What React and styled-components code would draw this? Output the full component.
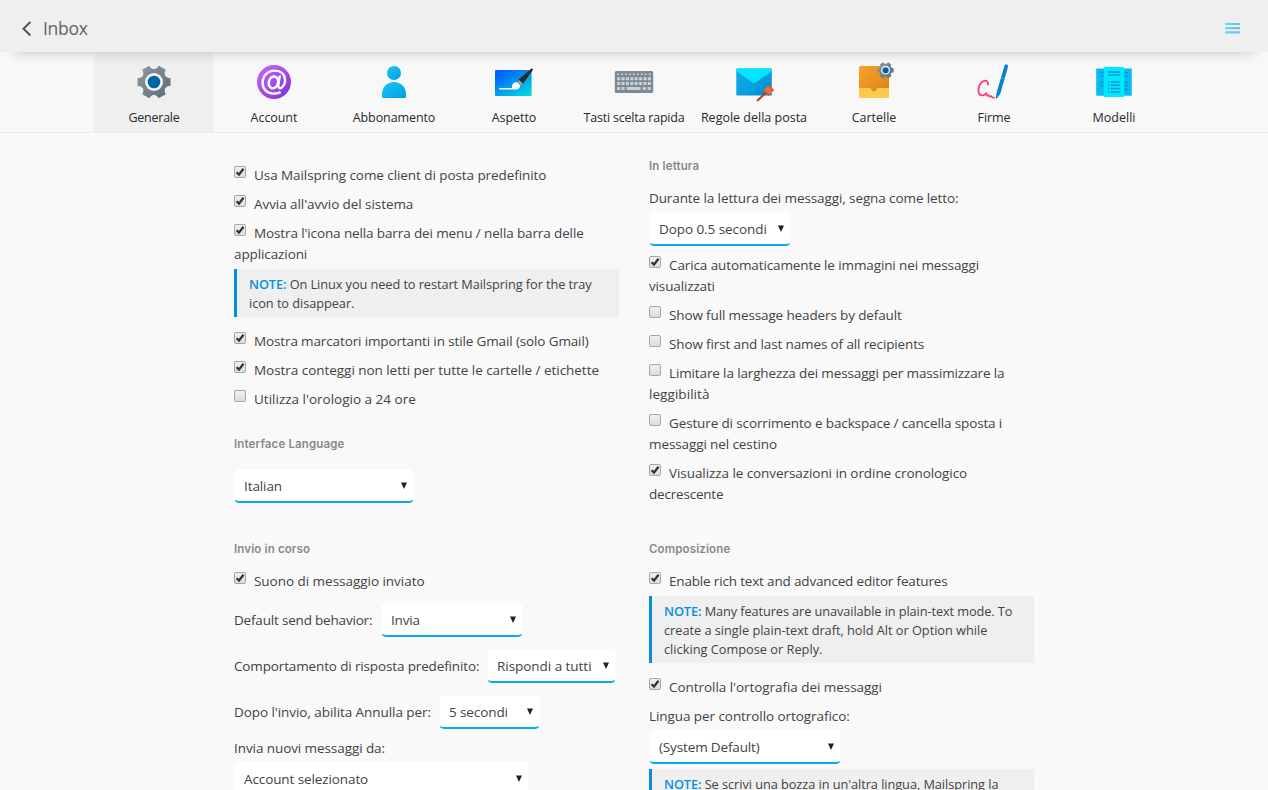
import React from "react";
import styled, { createGlobalStyle } from "styled-components";

const Global = createGlobalStyle`
  * { box-sizing: border-box; }
  html, body { margin: 0; padding: 0; height: 100%; overflow: hidden; background: #f9f9f9; }
  body { font-family: "Open Sans", "Noto Sans", sans-serif; font-size: 13.5px; color: #434343; }
`;

const Page = styled.div`
  height: 100vh;
  overflow: hidden;
  display: flex;
  flex-direction: column;
`;

const Toolbar = styled.header`
  flex: none;
  height: 52px;
  padding: 4px 28px 0 21px;
  display: flex;
  align-items: center;
  justify-content: space-between;
  background: #efefef;
  box-shadow: 0 14px 14px -14px rgba(0, 0, 0, 0.22);
  position: relative;
  z-index: 1;
`;

const BackButton = styled.button`
  display: flex;
  align-items: center;
  gap: 11px;
  padding: 0;
  border: 0;
  background: none;
  font: 400 17.5px/24px "Open Sans", sans-serif;
  letter-spacing: -0.3px;
  color: #636363;
`;

const BackLabel = styled.span`
  padding-bottom: 1px;
`;

const Tabs = styled.nav`
  flex: none;
  height: 81px;
  padding-left: 94px;
  display: flex;
  border-bottom: 1px solid #ebebeb;
  background: #f8f8f8;
`;

const Tab = styled.button`
  width: 120px;
  height: 80px;
  padding: 10px 0 0;
  border: 0;
  border-radius: 5px 5px 0 0;
  background: ${(p) => (p.$active ? "#efefef" : "transparent")};
  display: flex;
  flex-direction: column;
  align-items: center;
  gap: 7px;
`;

const TabIcon = styled.svg`
  width: 40px;
  height: 40px;
  overflow: visible;
`;

const TabLabel = styled.span`
  font: 400 12.5px/18px "Open Sans", sans-serif;
  letter-spacing: ${(p) => p.$tracking}px;
  color: #2b2829;
  white-space: nowrap;
`;

const Content = styled.main`
  flex: none;
  width: 800px;
  margin-left: 234px;
  padding-top: 24px;
  display: grid;
  grid-template-columns: 385px 385px;
  grid-template-rows: 383px auto;
  column-gap: 30px;
`;

const Section = styled.section`
  display: flex;
  flex-direction: column;
  align-items: flex-start;
  padding-top: ${(p) => p.$top || 0}px;
`;

const Heading = styled.h6`
  margin: ${(p) => p.$margin || "0 0 9px"};
  font: 600 11.5px/18px Inter, sans-serif;
  letter-spacing: 0.14px;
  color: #888;
`;

const Option = styled.label`
  display: block;
  width: 100%;
  padding: 4px 0;
  line-height: 21px;
`;

const Run = styled.span`
  letter-spacing: ${(p) => p.$tracking || 0}px;
  white-space: nowrap;
`;

const Box = styled.span`
  display: inline-flex;
  align-items: center;
  justify-content: center;
  width: 12px;
  height: 12px;
  margin: 1px 8px 0 0;
  vertical-align: top;
  border: 1px solid #a6a6a6;
  border-radius: 2px;
  background: linear-gradient(#f0f0f0, #dcdcdc);
`;

const Note = styled.div`
  width: 100%;
  margin-bottom: 10px;
  padding: 6px 0 4px 12px;
  border-left: 3px solid #0490d9;
  background: #efefef;
  font-size: 12.75px;
  line-height: 19px;
  white-space: nowrap;
  b { font-weight: 600; letter-spacing: -0.1px; color: #0490e0; }
`;

const Text = styled.div`
  padding: 4px 0 3px;
  line-height: 21px;
`;

const Field = styled.div`
  height: 46px;
  padding-top: 2px;
  display: flex;
  align-items: center;
`;

const FieldLabel = styled.span`
  width: ${(p) => p.$width}px;
  padding-top: 1px;
  line-height: 21px;
`;

const Select = styled.div`
  flex: none;
  width: ${(p) => p.$width}px;
  height: 34px;
  margin: ${(p) => p.$margin || "0"};
  padding: 0 6px 0 9px;
  display: flex;
  align-items: center;
  justify-content: space-between;
  border: 1px solid #fdfdfd;
  border-bottom: 2px solid #05ade6;
  border-radius: 5px;
  background: #fff;
  line-height: 21px;
`;

const Value = styled(Run)`
  padding-top: 2px;
`;

const Arrow = () => (
  <svg width="6" height="8" viewBox="0 0 6 8"><path d="M0 .5h6L3 7z" fill="#222" /></svg>
);

const gearPath = (cx, cy, r) => {
  const pt = (deg, rad) => {
    const a = (deg * Math.PI) / 180;
    return `${(cx + Math.cos(a) * rad * r).toFixed(2)} ${(cy + Math.sin(a) * rad * r).toFixed(2)}`;
  };
  let d = "";
  for (let i = 0; i < 6; i++) {
    const a = i * 60;
    d += `${i ? "L" : "M"}${pt(a - 14, 1)}L${pt(a + 14, 1)}Q${pt(a + 16, 0.84)} ${pt(a + 22, 0.8)}Q${pt(a + 30, 0.7)} ${pt(a + 38, 0.8)}Q${pt(a + 44, 0.84)} ${pt(a + 46, 1)}`;
  }
  return d + "z";
};

const Gear = ({ cx, cy, r, id }) => (
  <>
    <defs>
      <linearGradient id={id} x1="0" y1="0" x2="1" y2="1"><stop offset="0" stopColor="#8e9ba1" /><stop offset="1" stopColor="#5d6b74" /></linearGradient>
    </defs>
    <path d={gearPath(cx, cy, r)} fill={`url(#${id})`} />
    <circle cx={cx} cy={cy} r={r * 0.53} fill="#f2f2f2" />
    <circle cx={cx} cy={cy} r={r * 0.37} fill="#0064a8" />
  </>
);

const GeneralIcon = () => <TabIcon viewBox="0 0 40 40"><Gear cx={20} cy={20} r={17} id="gearLarge" /></TabIcon>;

const AccountIcon = () => (
  <TabIcon viewBox="0 0 40 40">
    <defs><linearGradient id="acc" x1="0" y1="0" x2="1" y2="1"><stop offset="0.1" stopColor="#c463f0" /><stop offset="0.9" stopColor="#8238dc" /></linearGradient></defs>
    <circle cx="20" cy="20" r="17" fill="url(#acc)" />
    <g fill="none" stroke="#fff" strokeWidth="2.4">
      <ellipse cx="19.4" cy="20.4" rx="4.6" ry="6" transform="rotate(14 19.4 20.4)" />
      <path d="M25.800 13.600 24.300 22.800C23.900 25.900 25.600 26.800 27.300 25.700 29.800 24 31.200 21 31 17.600 30.600 11.800 26.400 8.600 20.800 8.600 13.600 8.600 8.600 13.800 8.600 20.600c0 6.800 4.600 11 11.200 11 2.800 0 5-.5 6.800-1.500" />
    </g>
  </TabIcon>
);

const PersonIcon = () => (
  <TabIcon viewBox="0 0 40 40">
    <defs><linearGradient id="per" x1="0" y1="0" x2="1" y2="1"><stop offset="0" stopColor="#1cc6ee" /><stop offset="1" stopColor="#009fe6" /></linearGradient></defs>
    <circle cx="20" cy="11" r="7" fill="url(#per)" />
    <path d="M8 35V32C8 25 13 20 20 20s12 5 12 12v3q0 1-1 1H9q-1 0-1-1z" fill="url(#per)" />
  </TabIcon>
);

const BrushIcon = () => (
  <TabIcon viewBox="0 0 40 40">
    <defs><linearGradient id="can" x1="0.1" y1="0" x2="0.9" y2="1"><stop offset="0.1" stopColor="#0062fa" /><stop offset="1" stopColor="#00dbe0" /></linearGradient></defs>
    <rect x="1" y="8" width="36.6" height="26" rx="1" fill="url(#can)" />
    <path d="M5.200 26h13c-.6-3.800 1.400-6 4-5.800 2.600.1 4.400 2.200 3.800 4.600-.6 2.300-2.600 2.800-5.400 2.800H5.200z" fill="#fff" />
    <path d="M26 18 28.600 20.600 26.400 23.800 22.800 20.400z" fill="#9aa3aa" />
    <path d="M37.800 6.200 39.200 7.400 29 21.400 24.600 17.400z" fill="#2b2b2b" />
  </TabIcon>
);

const KeyboardIcon = () => {
  const keys = [];
  for (let r = 0; r < 3; r++)
    for (let c = 0; c < (r === 0 ? 9 : 8); c++)
      keys.push(<rect key={`${r}-${c}`} x={3 + c * (r === 0 ? 3.95 : 4.4)} y={[11.5, 15.2, 20][r]} width={r === 0 ? 2.2 : 3.2} height={r === 0 ? 1.6 : 3} rx=".4" />);
  return (
    <TabIcon viewBox="0 0 40 40">
      <rect x=".8" y="9" width="38.400" height="22" rx="1.500" fill="#7d8a92" />
      <g fill="#c8d1d7">
        {keys}
        <rect x="3" y="25" width="3.200" height="3" rx=".4" />
        <rect x="7.400" y="25" width="3.200" height="3" rx=".4" />
        <rect x="12.600" y="25" width="14" height="3" rx=".4" />
        <rect x="28.800" y="25" width="3.200" height="3" rx=".4" />
        <rect x="33.600" y="25" width="3.200" height="3" rx=".4" />
      </g>
    </TabIcon>
  );
};

const RulesIcon = () => (
  <TabIcon viewBox="0 0 40 40">
    <defs><linearGradient id="env" x1="0" y1="0" x2="1" y2="1"><stop offset="0" stopColor="#10a8e4" /><stop offset=".5" stopColor="#0aa2e0" /><stop offset="1" stopColor="#0086d0" /></linearGradient></defs>
    <rect x="2.300" y="6.400" width="35.500" height="27" rx="1" fill="url(#env)" />
    <path d="M2.300 7.400q0-1 1-1h33.500q1 0 1 1v1.800L21 20.800q-1 .7-2 0L2.300 9.200z" fill="#00e6fc" />
    <path d="M23.800 38.300 33 29.600" stroke="#c0401c" strokeWidth="2.200" strokeLinecap="round" />
    <path d="M34.400 23.400 39.400 28.600 35 33.200 29.800 27.800z" fill="#e8713a" />
    <path d="M33.800 23.700 35 22.700 40.300 28.300 39 29.600zM30 27.200 29 28.300 34.400 34 35.600 32.900z" fill="#d2562a" />
  </TabIcon>
);

const FoldersIcon = () => (
  <TabIcon viewBox="0 0 40 40">
    <defs><linearGradient id="fol" x1="0" y1="0" x2="1" y2="1"><stop offset="0" stopColor="#f9a22a" /><stop offset="1" stopColor="#d9801c" /></linearGradient></defs>
    <rect x="5" y="4" width="30" height="31" rx="1.500" fill="url(#fol)" />
    <path d="M5 26h10.500q1 0 1.600 1l1 1.700q1.900 1.600 3.800 0l1-1.700q.6-1 1.600-1H35v8.500q0 1.500-1.500 1.500h-27Q5 36 5 34.500z" fill="#fec84e" />
    <Gear cx={31.600} cy={8.200} r={8.300} id="gearSmall" />
  </TabIcon>
);

const SignatureIcon = () => (
  <TabIcon viewBox="0 0 40 40">
    <path d="M14 22.500c.3-3.300-1.800-4.400-4.200-3.600C6 20.200 3.700 26 4.600 30.200c.8 3.900 4.800 4.400 7.800 1-.4 2.600.8 3 2.400 1.700-.2 1.700.8 2 2.600 1.200.2.900 1.800 1.600 2.800 1.600" fill="none" stroke="#fb3f74" strokeWidth="1.800" strokeLinecap="round" strokeLinejoin="round" />
    <path d="M30.600 3.200q1-1.200 2.300-.7 1.400.6 1.100 2.200L26.400 31.500 22.900 36.600q-1.400 0-1-1.500L22.800 30z" fill="#0682d3" />
    <path d="M27.300 15.900 30.800 17" stroke="#27b2ee" strokeWidth="1.200" />
  </TabIcon>
);

const TemplatesIcon = () => (
  <TabIcon viewBox="0 0 40 40">
    <rect x="2.200" y="6.400" width="35.600" height="27.300" rx="1.200" fill="#06bdf0" />
    <path d="M6 10.700h4M6 14h4M6 20.500h4M6 24h4M30 10.700h4M30 14h4M30 20.500h4M30 24h4M30 27.500h4" stroke="#0799dc" strokeWidth="1.400" />
    <rect x="9.800" y="5" width="20.400" height="30" rx="1.500" fill="#00e8ff" />
    <path d="M14 10h12M14 13h12M14 20h1.500M17 20h9M14 23.200h1.500M17 23.200h9M14 26.600h1.500M17 26.600h9M14 30h1.500M17 30h9" stroke="#0796d4" strokeWidth="1.500" />
  </TabIcon>
);

const TABS = [
  ["Generale", GeneralIcon, -0.25],
  ["Account", AccountIcon, -0.06],
  ["Abbonamento", PersonIcon, -0.1],
  ["Aspetto", BrushIcon, -0.05],
  ["Tasti scelta rapida", KeyboardIcon, -0.2],
  ["Regole della posta", RulesIcon, 0],
  ["Cartelle", FoldersIcon, 0],
  ["Firme", SignatureIcon, -0.1],
  ["Modelli", TemplatesIcon, 0],
];

const Lines = ({ lines }) =>
  lines.map(([text, tracking], i) => (
    <React.Fragment key={text}>
      {i > 0 && <br />}
      <Run $tracking={tracking}>{text}</Run>
    </React.Fragment>
  ));

const Check = ({ on, lines }) => (
  <Option>
    <Box>
      {on && (
        <svg width="10" height="10" viewBox="0 0 10 10"><path d="M1.600 5.200 4 7.600 8.500 1.800" fill="none" stroke="#333" strokeWidth="2.300" /></svg>
      )}
    </Box>
    <Lines lines={lines} />
  </Option>
);

const Dropdown = ({ width, margin, text, tracking }) => (
  <Select $width={width} $margin={margin}>
    <Value $tracking={tracking}>{text}</Value>
    <Arrow />
  </Select>
);

export default function App() {
  return (
    <Page>
      <Global />
      <Toolbar>
        <BackButton>
          <svg width="11" height="16" viewBox="0 0 11 16"><path d="M9.300 2 2.500 8.800 9.300 15.500" fill="none" stroke="#555" strokeWidth="2" /></svg>
          <BackLabel>Inbox</BackLabel>
        </BackButton>
        <svg width="15" height="12" viewBox="0 0 15 12">
          <defs><linearGradient id="menu" gradientUnits="userSpaceOnUse" x1="0" y1="0" x2="15" y2="0"><stop offset="0" stopColor="#6fdcf0" /><stop offset="1" stopColor="#70bbe8" /></linearGradient></defs>
          <path d="M0 2h15M0 6.200h15M0 10.400h15" stroke="url(#menu)" strokeWidth="2.200" />
        </svg>
      </Toolbar>
      <Tabs>
        {TABS.map(([name, Icon, tracking], i) => (
          <Tab key={name} $active={i === 0}>
            <Icon />
            <TabLabel $tracking={tracking}>{name}</TabLabel>
          </Tab>
        ))}
      </Tabs>
      <Content>
        <Section $top={4}>
          <Check on lines={[["Usa Mailspring come client di posta predefinito", -0.07]]} />
          <Check on lines={[["Avvia all'avvio del sistema", -0.07]]} />
          <Check on lines={[["Mostra l'icona nella barra dei menu / nella barra delle", -0.12], ["applicazioni", -0.1]]} />
          <Note>
            <b>NOTE:</b> <Lines lines={[["On Linux you need to restart Mailspring for the tray", -0.07], ["icon to disappear.", -0.05]]} />
          </Note>
          <Check on lines={[["Mostra marcatori importanti in stile Gmail (solo Gmail)", -0.13]]} />
          <Check on lines={[["Mostra conteggi non letti per tutte le cartelle / etichette", -0.04]]} />
          <Check lines={[["Utilizza l'orologio a 24 ore", 0]]} />
          <Heading $margin="21px 0 16px">Interface Language</Heading>
          <Dropdown width={180} text="Italian" tracking={-0.1} />
        </Section>
        <Section>
          <Heading>In lettura</Heading>
          <Text><Lines lines={[["Durante la lettura dei messaggi, segna come letto:", -0.1]]} /></Text>
          <Dropdown width={142} margin="0 0 5px" text="Dopo 0.5 secondi" tracking={-0.07} />
          <Check on lines={[["Carica automaticamente le immagini nei messaggi", -0.11], ["visualizzati", -0.14]]} />
          <Check lines={[["Show full message headers by default", -0.13]]} />
          <Check lines={[["Show first and last names of all recipients", -0.13]]} />
          <Check lines={[["Limitare la larghezza dei messaggi per massimizzare la", -0.13], ["leggibilità", 0.06]]} />
          <Check lines={[["Gesture di scorrimento e backspace / cancella sposta i", -0.13], ["messaggi nel cestino", -0.1]]} />
          <Check on lines={[["Visualizza le conversazioni in ordine cronologico", -0.07], ["decrescente", -0.2]]} />
        </Section>
        <Section>
          <Heading>Invio in corso</Heading>
          <Check on lines={[["Suono di messaggio inviato", -0.03]]} />
          <Field>
            <FieldLabel $width={147}><Run $tracking={-0.19}>Default send behavior:</Run></FieldLabel>
            <Dropdown width={142} text="Invia" tracking={-0.2} />
          </Field>
          <Field>
            <FieldLabel $width={253}><Run $tracking={-0.14}>Comportamento di risposta predefinito:</Run></FieldLabel>
            <Dropdown width={129} text="Rispondi a tutti" tracking={-0.04} />
          </Field>
          <Field>
            <FieldLabel $width={205}><Run $tracking={-0.06}>Dopo l'invio, abilita Annulla per:</Run></FieldLabel>
            <Dropdown width={101} text="5 secondi" tracking={-0.1} />
          </Field>
          <Text><Run $tracking={-0.08}>Invia nuovi messaggi da:</Run></Text>
          <Dropdown width={295} text="Account selezionato" tracking={-0.1} />
        </Section>
        <Section>
          <Heading>Composizione</Heading>
          <Check on lines={[["Enable rich text and advanced editor features", -0.17]]} />
          <Note>
            <b>NOTE:</b> <Lines lines={[["Many features are unavailable in plain-text mode. To", -0.09], ["create a single plain-text draft, hold Alt or Option while", -0.02], ["clicking Compose or Reply.", 0.01]]} />
          </Note>
          <Check on lines={[["Controlla l'ortografia dei messaggi", -0.05]]} />
          <Text><Run $tracking={-0.07}>Lingua per controllo ortografico:</Run></Text>
          <Dropdown width={192} margin="0 0 5px" text="(System Default)" tracking={-0.14} />
          <Note>
            <b>NOTE:</b> <Lines lines={[["Se scrivi una bozza in un'altra lingua, Mailspring la", -0.05]]} />
          </Note>
        </Section>
      </Content>
    </Page>
  );
}
